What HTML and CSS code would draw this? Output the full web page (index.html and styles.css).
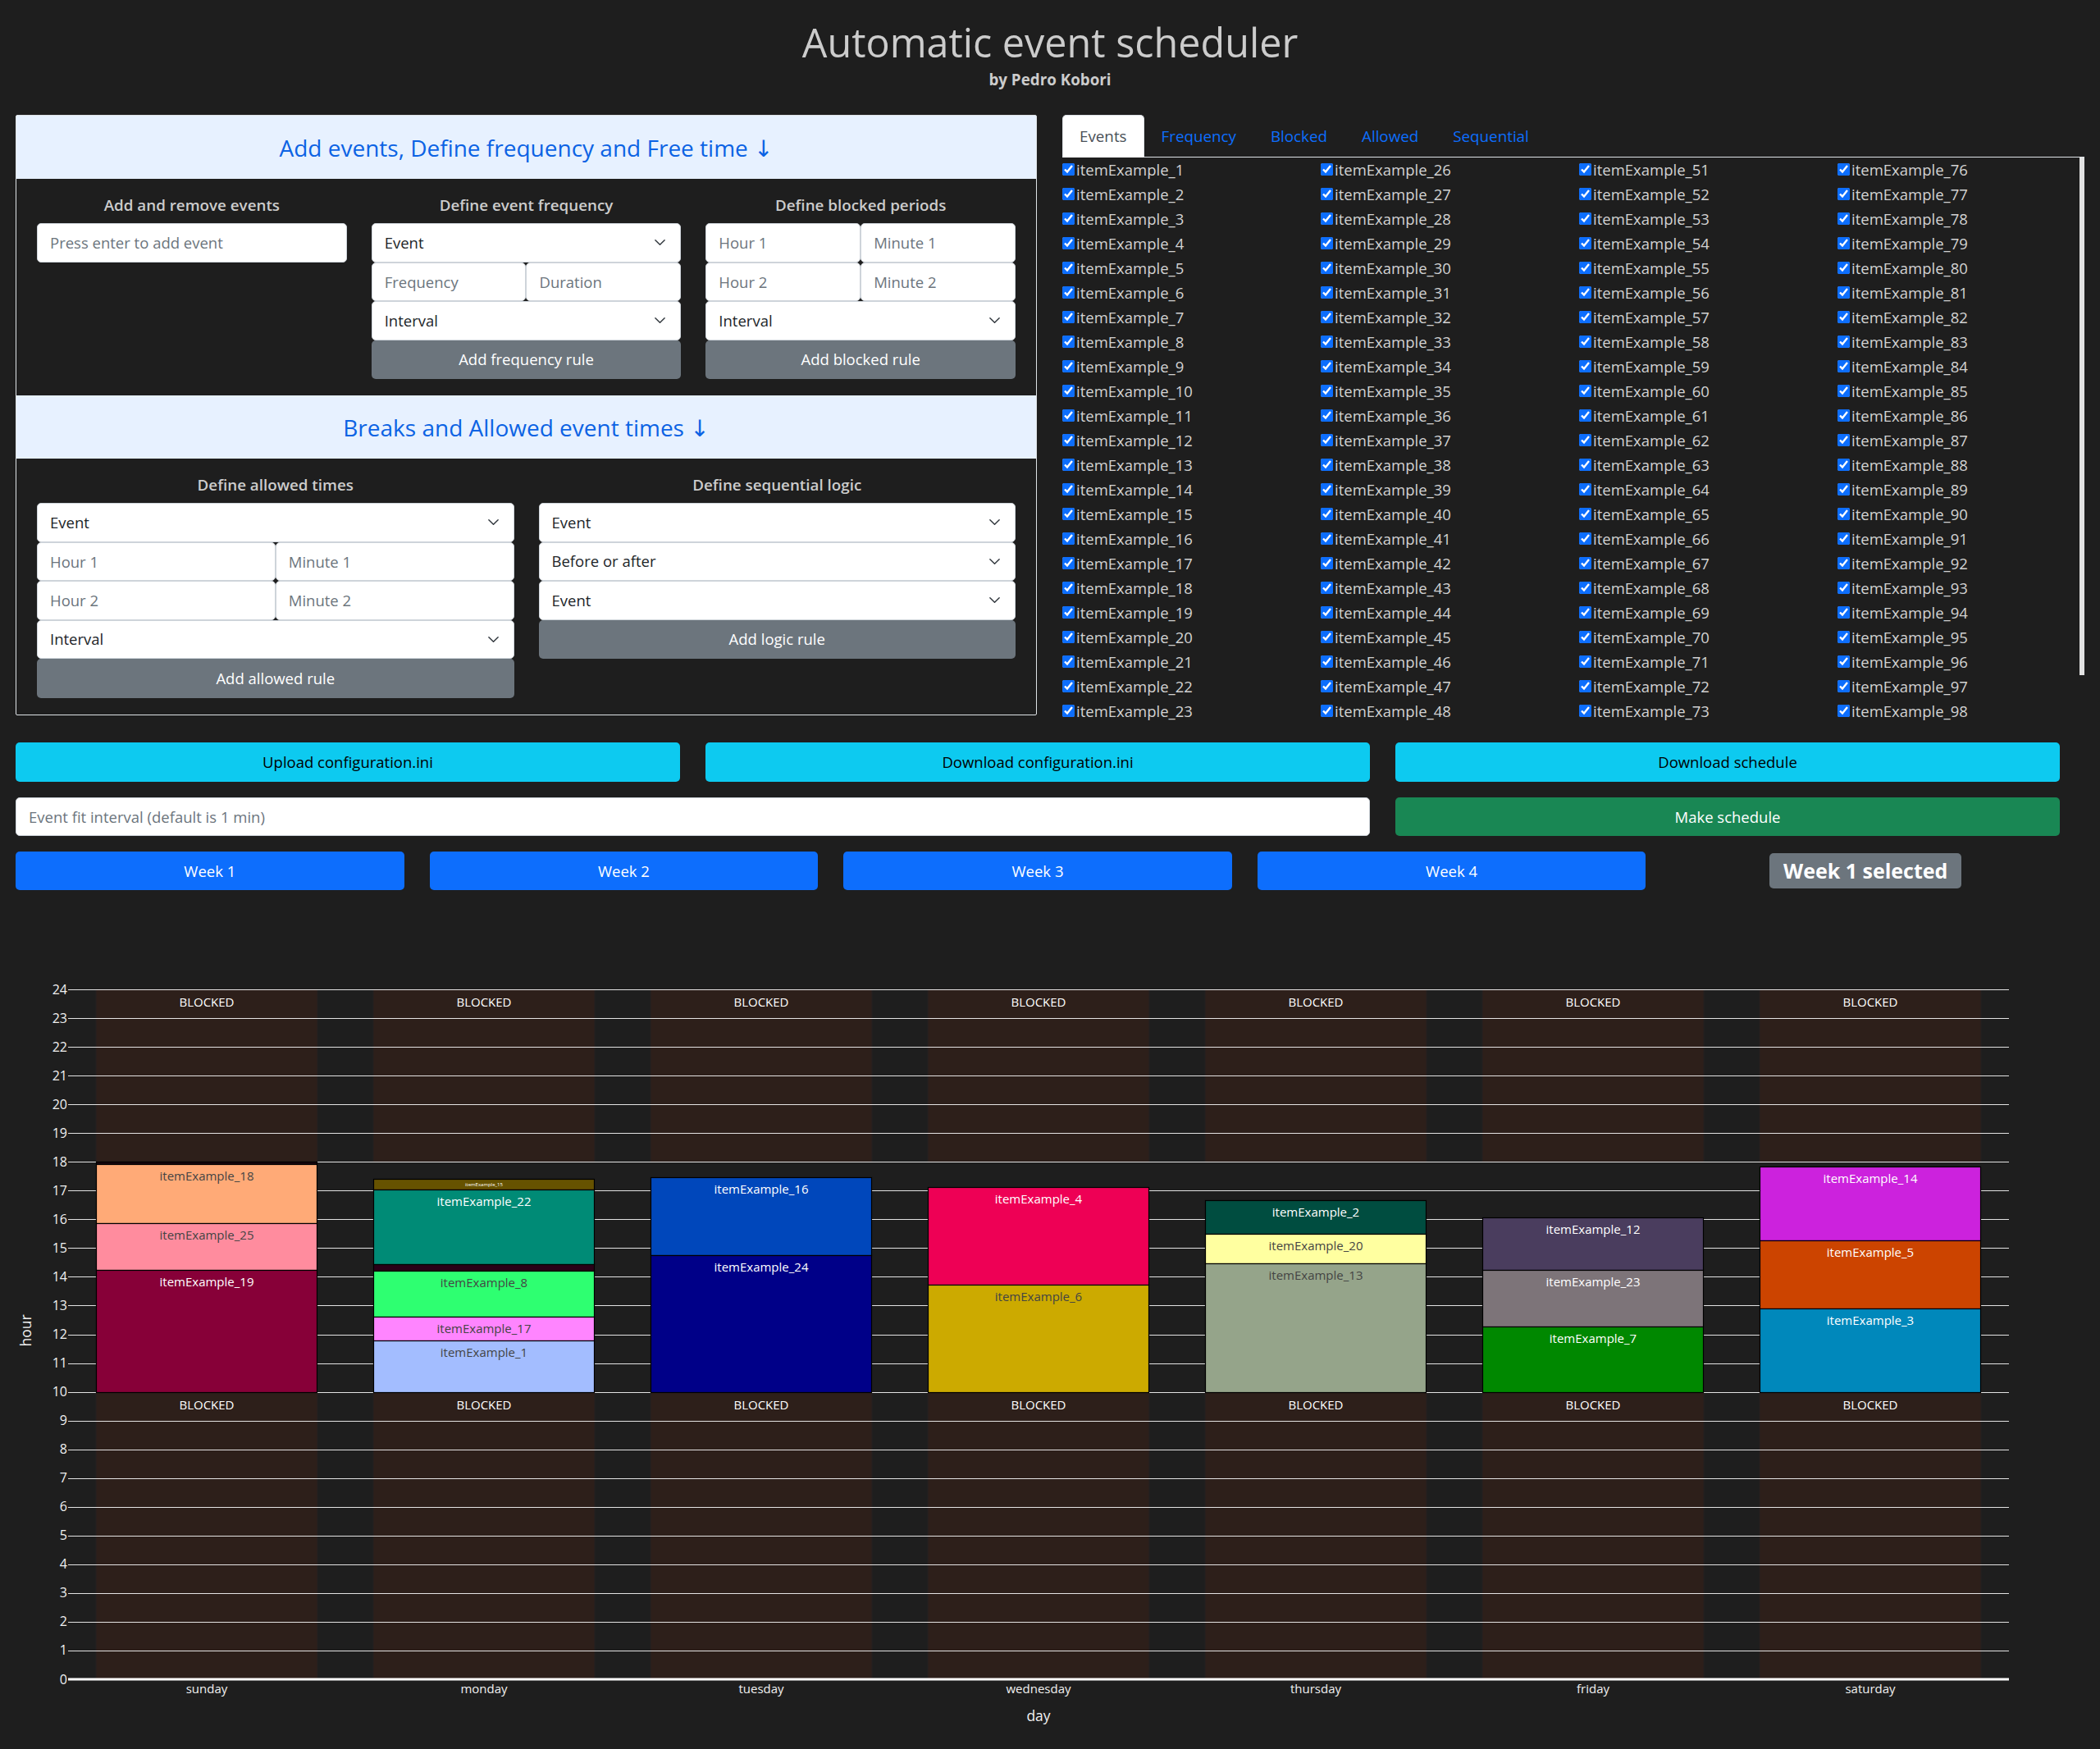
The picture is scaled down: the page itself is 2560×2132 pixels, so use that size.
FILE: index.html
```html
<!DOCTYPE html>
<html lang="en">
<head>
<meta charset="utf-8">
<title>Automatic event scheduler</title>
<link rel="stylesheet" href="styles.css">
</head>
<body>
<header class="page-head">
  <h1 class="title">Automatic event scheduler</h1>
  <p class="byline">by Pedro Kobori</p>
</header>

<main class="top">
  <section class="panel">
    <div class="acc-head">Add events, Define frequency and Free time ↓</div>
    <div class="acc-body cols-3">
      <div class="group">
        <h6 class="group-title">Add and remove events</h6>
        <input class="field" placeholder="Press enter to add event">
      </div>
      <div class="group">
        <h6 class="group-title">Define event frequency</h6>
        <div class="field select"><span>Event</span><svg class="chev" viewBox="0 0 16 16"><path d="m2 5 6 6 6-6"/></svg></div>
        <div class="pair"><input class="field" placeholder="Frequency"><input class="field" placeholder="Duration"></div>
        <div class="field select"><span>Interval</span><svg class="chev" viewBox="0 0 16 16"><path d="m2 5 6 6 6-6"/></svg></div>
        <button class="btn gray">Add frequency rule</button>
      </div>
      <div class="group">
        <h6 class="group-title">Define blocked periods</h6>
        <div class="pair"><input class="field" placeholder="Hour 1"><input class="field" placeholder="Minute 1"></div>
        <div class="pair"><input class="field" placeholder="Hour 2"><input class="field" placeholder="Minute 2"></div>
        <div class="field select"><span>Interval</span><svg class="chev" viewBox="0 0 16 16"><path d="m2 5 6 6 6-6"/></svg></div>
        <button class="btn gray">Add blocked rule</button>
      </div>
    </div>
    <div class="acc-head">Breaks and Allowed event times ↓</div>
    <div class="acc-body cols-2">
      <div class="group">
        <h6 class="group-title">Define allowed times</h6>
        <div class="field select"><span>Event</span><svg class="chev" viewBox="0 0 16 16"><path d="m2 5 6 6 6-6"/></svg></div>
        <div class="pair"><input class="field" placeholder="Hour 1"><input class="field" placeholder="Minute 1"></div>
        <div class="pair"><input class="field" placeholder="Hour 2"><input class="field" placeholder="Minute 2"></div>
        <div class="field select"><span>Interval</span><svg class="chev" viewBox="0 0 16 16"><path d="m2 5 6 6 6-6"/></svg></div>
        <button class="btn gray">Add allowed rule</button>
      </div>
      <div class="group">
        <h6 class="group-title">Define sequential logic</h6>
        <div class="field select"><span>Event</span><svg class="chev" viewBox="0 0 16 16"><path d="m2 5 6 6 6-6"/></svg></div>
        <div class="field select"><span>Before or after</span><svg class="chev" viewBox="0 0 16 16"><path d="m2 5 6 6 6-6"/></svg></div>
        <div class="field select"><span>Event</span><svg class="chev" viewBox="0 0 16 16"><path d="m2 5 6 6 6-6"/></svg></div>
        <button class="btn gray">Add logic rule</button>
      </div>
    </div>
  </section>

  <section class="side">
    <nav class="tabs">
      <span class="tab active">Events</span>
      <span class="tab">Frequency</span>
      <span class="tab">Blocked</span>
      <span class="tab">Allowed</span>
      <span class="tab">Sequential</span>
    </nav>
    <div class="list-scroll">
      <div class="event-list" id="event-list"></div>
    </div>
    <div class="scroll-thumb"></div>
  </section>
</main>

<section class="actions">
  <div class="row row-3">
    <button class="btn cyan">Upload configuration.ini</button>
    <button class="btn cyan">Download configuration.ini</button>
    <button class="btn cyan">Download schedule</button>
  </div>
  <div class="row row-3">
    <input class="field fit" placeholder="Event fit interval (default is 1 min)">
    <button class="btn green">Make schedule</button>
  </div>
  <div class="row row-5">
    <button class="btn blue">Week 1</button>
    <button class="btn blue">Week 2</button>
    <button class="btn blue">Week 3</button>
    <button class="btn blue">Week 4</button>
    <div class="badge-cell"><span class="badge">Week 1 selected</span></div>
  </div>
</section>

<div class="chart">
  <svg id="chart" class="chart-svg" width="2560" height="1032" viewBox="0 0 2560 1032"></svg>
</div>

<script src="script.js"></script>
</body>
</html>
```

FILE: styles.css
```css
* { box-sizing: border-box; }

body {
  margin: 0;
  background: #1e1e1e;
  color: #cfcfcf;
  font-family: "Open Sans", "Noto Sans", "DejaVu Sans", sans-serif;
  font-size: 18.5px;
  line-height: 30px;
}

.page-head {
  text-align: center;
  padding-top: 21px;
}

.title {
  margin: 0;
  font-size: 48.5px;
  font-weight: 500;
  line-height: 60px;
  color: #cccccc;
}

.byline {
  margin: 1px 0 0;
  font-size: 18.8px;
  font-weight: 700;
  line-height: 30px;
  color: #cccccc;
}

.top {
  display: grid;
  grid-template-columns: 1245px 1246px;
  column-gap: 31px;
  padding-left: 19px;
  margin-top: 28px;
  align-items: start;
}

.panel {
  border: 1px solid #dee2e6;
  border-radius: 2px;
}

.acc-head {
  height: 77px;
  display: flex;
  align-items: center;
  justify-content: center;
  background: #e7f1ff;
  color: #0c63e4;
  font-size: 28px;
  line-height: 34px;
}

.acc-body {
  display: grid;
  column-gap: 30px;
  padding: 20px 25px;
}

.cols-3 { grid-template-columns: repeat(3, 1fr); }
.cols-2 { grid-template-columns: repeat(2, 1fr); }

.group {
  display: flex;
  flex-direction: column;
}

.group-title {
  margin: 0 0 10px;
  font-size: 18.8px;
  font-weight: 600;
  line-height: 24px;
  text-align: center;
  color: #cccccc;
}

.field {
  display: block;
  width: 100%;
  height: 47.5px;
  margin: 0;
  padding: 0 15px;
  background: #fff;
  border: 1px solid #ced4da;
  border-radius: 5px;
  color: #212529;
  font: inherit;
  line-height: 30px;
}

.field::placeholder { color: #6c757d; }

.select {
  display: flex;
  align-items: center;
  justify-content: space-between;
  padding-right: 17px;
}

.chev {
  width: 15px;
  height: 15px;
  fill: none;
  stroke: #343a40;
  stroke-width: 1.6;
  stroke-linecap: round;
  stroke-linejoin: round;
}

.pair {
  display: grid;
  grid-template-columns: 1fr 1fr;
}

.btn {
  display: block;
  width: 100%;
  margin: 0;
  border: 0;
  border-radius: 5px;
  font: inherit;
  line-height: 30px;
  text-align: center;
  cursor: pointer;
}

.gray { height: 47.5px; background: #6c757d; color: #fff; }
.cyan { background: #0dcaf0; color: #000; }
.green { background: #198754; color: #fff; }
.blue { background: #0d6efd; color: #fff; }

/* side tabs */
.side {
  position: relative;
  display: flex;
  flex-direction: column;
}

.tabs {
  display: flex;
  border-bottom: 1px solid #dee2e6;
}

.tab {
  padding: 10px 20px;
  font-size: 18.8px;
  line-height: 30px;
  color: #0d6efd;
  border: 1px solid transparent;
  border-radius: 5px 5px 0 0;
  margin-bottom: -1px;
}

.tab.active {
  background: #fff;
  color: #495057;
  border-color: #dee2e6 #dee2e6 #fff;
}

.list-scroll {
  height: 688px;
  overflow: hidden;
}

.scroll-thumb {
  position: absolute;
  top: 52px;
  right: 0;
  width: 6px;
  height: 631px;
  background: #e2e2e2;
}

.event-list {
  display: grid;
  grid-template-columns: repeat(4, 315px);
  grid-template-rows: repeat(23, 30px);
  grid-auto-flow: column;
}

.item {
  line-height: 30px;
  white-space: nowrap;
  color: #d2d2d2;
}

.item input {
  width: 15px;
  height: 15px;
  margin: 0 2px 0 0;
  vertical-align: baseline;
  accent-color: #0d6efd;
}

/* action rows */
.actions {
  width: 2511px;
  padding-left: 19px;
  margin-top: 25px;
}

.row {
  display: grid;
  column-gap: 31px;
}

.row + .row { margin-top: 19px; }

.row-3 { grid-template-columns: repeat(3, 1fr); }
.row-3 .btn { height: 48px; }

.fit { grid-column: span 2; height: 47px; }
.row-3 .green { height: 47px; }

.row-5 { grid-template-columns: repeat(5, 1fr); }
.row-5 .btn { height: 47px; }

.badge-cell {
  display: flex;
  align-items: center;
  justify-content: center;
}

.badge {
  display: inline-block;
  height: 43px;
  padding: 0 17px;
  background: #6c757d;
  color: #fff;
  border-radius: 5px;
  font-size: 25px;
  font-weight: 700;
  line-height: 43px;
}

.chart {
  margin-top: 15px;
}

.chart-svg {
  display: block;
  font-family: "Open Sans", "Noto Sans", sans-serif;
}
```

FILE: script.js
```js
(function () {
  // ---- event list (visible part of the scrolled list: 23 rows per column) ----
  var list = document.getElementById('event-list');
  var out = '';
  for (var c = 0; c < 4; c++) {
    for (var r = 0; r < 23; r++) {
      var n = c * 25 + r + 1;
      out += '<label class="item"><input type="checkbox" checked>itemExample_' + n + '</label>';
    }
  }
  list.innerHTML = out;

  // ---- chart ----
  var NS = 'http://www.w3.org/2000/svg';
  var svg = document.getElementById('chart');
  var OY = 1100;           // page y of svg top
  var X0 = 83, X1 = 2449;  // plot area x
  var Y0 = 2047, PH = 35.04;
  var PITCH = 338, BX = 117, BW = 270;

  function el(tag, attrs, text) {
    var e = document.createElementNS(NS, tag);
    for (var k in attrs) e.setAttribute(k, attrs[k]);
    if (text != null) e.textContent = text;
    svg.appendChild(e);
    return e;
  }
  function yh(h) { return Y0 - h * PH - OY; }

  var days = ['sunday', 'monday', 'tuesday', 'wednesday', 'thursday', 'friday', 'saturday'];

  // blocked areas
  days.forEach(function (d, i) {
    var x = BX + i * PITCH;
    el('rect', { x: x, y: yh(24), width: BW, height: 6 * PH, fill: '#2d1f1a', stroke: '#252120', 'stroke-width': 1 });
    el('rect', { x: x, y: yh(10), width: BW, height: 10 * PH, fill: '#2d1f1a', stroke: '#252120', 'stroke-width': 1 });
  });

  // grid lines
  for (var h = 1; h <= 24; h++) {
    var y = Math.round(yh(h)) + 0.5;
    el('line', { x1: 83, x2: X1, y1: y, y2: y, stroke: 'rgba(255,255,255,0.88)', 'stroke-width': 1 });
  }

  // blocked labels
  days.forEach(function (d, i) {
    var cx = BX + i * PITCH + BW / 2;
    el('text', { x: cx, y: yh(24) + 21, 'text-anchor': 'middle', fill: '#ffffff', 'font-size': 15 }, 'BLOCKED');
    el('text', { x: cx, y: yh(10) + 21, 'text-anchor': 'middle', fill: '#ffffff', 'font-size': 15 }, 'BLOCKED');
  });

  // bars: [top px, bottom px, color, label, text colour, font size]
  var bars = [
    [[1416, 1419, '#1a0810', ''],
     [1419, 1491, '#ffaa77', 'itemExample_18', '#444'],
     [1491, 1548, '#ff8c9e', 'itemExample_25', '#444'],
     [1548, 1697, '#870038', 'itemExample_19', '#fff']],
    [[1437, 1450, '#665200', 'itemExample_15', '#fff', 6],
     [1450, 1541, '#008b76', 'itemExample_22', '#fff'],
     [1541, 1549, '#2a0018', ''],
     [1549, 1605, '#2eff71', 'itemExample_8', '#444'],
     [1605, 1634, '#ff85ff', 'itemExample_17', '#444'],
     [1634, 1697, '#a3bdff', 'itemExample_1', '#444']],
    [[1435, 1530, '#0047bb', 'itemExample_16', '#fff'],
     [1530, 1697, '#000088', 'itemExample_24', '#fff']],
    [[1447, 1566, '#ee0055', 'itemExample_4', '#fff'],
     [1566, 1697, '#ccaa00', 'itemExample_6', '#444']],
    [[1463, 1504, '#004d40', 'itemExample_2', '#fff'],
     [1504, 1540, '#ffffa0', 'itemExample_20', '#444'],
     [1540, 1697, '#95a48a', 'itemExample_13', '#444']],
    [[1484, 1548, '#4a3d5e', 'itemExample_12', '#fff'],
     [1548, 1617, '#7d7479', 'itemExample_23', '#fff'],
     [1617, 1697, '#008800', 'itemExample_7', '#fff']],
    [[1422, 1512, '#cc22dd', 'itemExample_14', '#fff'],
     [1512, 1595, '#cc4400', 'itemExample_5', '#fff'],
     [1595, 1697, '#0088bb', 'itemExample_3', '#fff']]
  ];

  bars.forEach(function (segs, i) {
    var x = BX + i * PITCH;
    segs.forEach(function (s) {
      el('rect', { x: x + 0.5, y: s[0] - OY + 0.5, width: BW - 1, height: s[1] - s[0], fill: s[2], stroke: '#000', 'stroke-width': 1.2 });
    });
    segs.forEach(function (s) {
      if (!s[3]) return;
      var fs = s[5] || 15;
      var by = fs < 10 ? s[0] - OY + 9 : s[0] - OY + 20;
      el('text', { x: x + BW / 2, y: by, 'text-anchor': 'middle', fill: s[4], 'font-size': fs }, s[3]);
    });
  });

  // zero line
  el('line', { x1: X0, x2: X1, y1: Y0 - OY, y2: Y0 - OY, stroke: '#ffffff', 'stroke-width': 3 });

  // y tick labels
  for (var t = 0; t <= 24; t++) {
    el('text', { x: 82, y: yh(t) + 5.5, 'text-anchor': 'end', fill: '#f0f0f0', 'font-size': 16 }, String(t));
  }

  // x tick labels
  days.forEach(function (d, i) {
    el('text', { x: BX + i * PITCH + BW / 2, y: 2064 - OY, 'text-anchor': 'middle', fill: '#f0f0f0', 'font-size': 15 }, d);
  });

  // axis titles
  el('text', { x: (X0 + X1) / 2, y: 2098 - OY, 'text-anchor': 'middle', fill: '#f0f0f0', 'font-size': 17.5 }, 'day');
  el('text', { x: 0, y: 0, 'text-anchor': 'middle', fill: '#f0f0f0', 'font-size': 17.5,
               transform: 'translate(38,' + (1622 - OY) + ') rotate(-90)' }, 'hour');
})();
```
